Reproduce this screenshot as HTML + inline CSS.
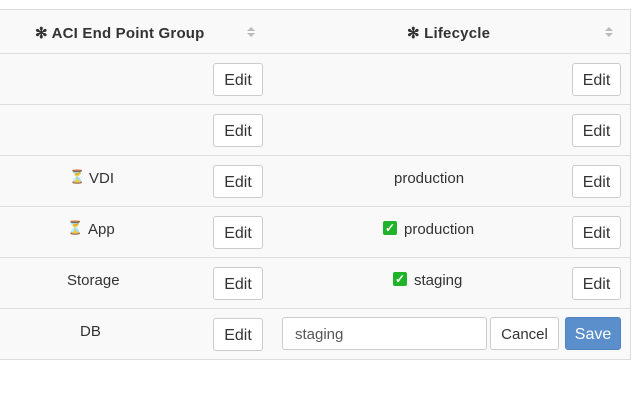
<!DOCTYPE html>
<html><head><style>
body{margin:0;width:640px;height:400px;background:#fff;font-family:"Liberation Sans",sans-serif;color:#333;position:relative;overflow:hidden}
.tbl{position:absolute;left:0;top:9px;width:631px;height:351px;background:#f9f9f9;border-top:1px solid #ddd;border-right:1px solid #ddd;border-bottom:1px solid #ddd;box-sizing:border-box}
.hl{position:absolute;left:0;width:630px;height:1px;background:#ddd}
.t{position:absolute;font-size:15px;white-space:nowrap}
.b{position:absolute;box-sizing:border-box;border:1px solid #ccc;background:#fff;border-radius:3px;font-size:16px;text-align:center;line-height:33px;height:33px;color:#333}
.h{position:absolute;font-size:15px;font-weight:bold;top:24px;letter-spacing:0.2px}
.sort{position:absolute;top:27px;width:0;height:0}
.sort:before{content:"";position:absolute;left:-4px;top:0;border-left:4px solid transparent;border-right:4px solid transparent;border-bottom:4px solid #bbb}
.sort:after{content:"";position:absolute;left:-4px;top:6px;border-left:4px solid transparent;border-right:4px solid transparent;border-top:4px solid #bbb}
.chk{position:absolute;width:14px;height:14px;background:#1fb32a;border-radius:2px;color:#fff;font-size:12px;line-height:14px;text-align:center;font-weight:bold}
.hg{position:absolute;font-size:13px;color:#6b3d1a}
</style></head><body>
<div class="tbl"></div>
<div class="hl" style="top:53px"></div>
<div class="hl" style="top:104px"></div>
<div class="hl" style="top:155px"></div>
<div class="hl" style="top:206px"></div>
<div class="hl" style="top:257px"></div>
<div class="hl" style="top:308px"></div>

<div class="h" style="left:35px">✻ ACI End Point Group</div>
<div class="sort" style="left:251px"></div>
<div class="h" style="left:407px">✻ Lifecycle</div>
<div class="sort" style="left:609px"></div>

<div class="b" style="left:213px;top:63px;width:50px">Edit</div>
<div class="b" style="left:572px;top:63px;width:49px">Edit</div>
<div class="b" style="left:213px;top:114px;width:50px">Edit</div>
<div class="b" style="left:572px;top:114px;width:49px">Edit</div>
<div class="b" style="left:213px;top:165px;width:50px">Edit</div>
<div class="b" style="left:572px;top:165px;width:49px">Edit</div>
<div class="b" style="left:213px;top:216px;width:50px">Edit</div>
<div class="b" style="left:572px;top:216px;width:49px">Edit</div>
<div class="b" style="left:213px;top:267px;width:50px">Edit</div>
<div class="b" style="left:572px;top:267px;width:49px">Edit</div>
<div class="b" style="left:213px;top:318px;width:50px">Edit</div>

<div class="hg" style="left:69px;top:169px">⏳</div>
<div class="t" style="left:89px;top:170px">VDI</div>
<div class="t" style="left:394px;top:170px">production</div>
<div class="hg" style="left:67px;top:220px">⏳</div>
<div class="t" style="left:88px;top:221px">App</div>
<div class="chk" style="left:383px;top:221px">✓</div>
<div class="t" style="left:404px;top:221px">production</div>
<div class="t" style="left:67px;top:272px">Storage</div>
<div class="chk" style="left:393px;top:272px">✓</div>
<div class="t" style="left:414px;top:272px">staging</div>
<div class="t" style="left:80px;top:323px">DB</div>

<div class="b" style="left:282px;top:317px;width:205px;text-align:left;padding-left:12px;font-size:15px;color:#555">staging</div>
<div class="b" style="left:490px;top:317px;width:69px;font-size:15px">Cancel</div>
<div class="b" style="left:565px;top:317px;width:56px;background:#5b8fcc;border-color:#4f83bf;color:#fff">Save</div>
</body></html>
